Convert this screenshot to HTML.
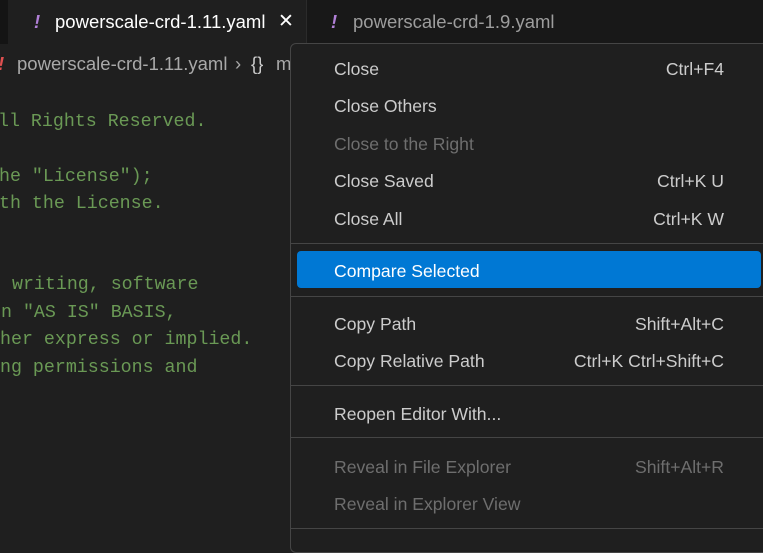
<!DOCTYPE html>
<html><head><style>
body{margin:0;width:763px;height:544px;overflow:hidden;background:#1f1f1f;font-family:"Segoe UI","Liberation Sans",sans-serif;position:relative}
.tabbar{position:absolute;left:0;top:0;width:763px;height:44px;background:#181818}
.tab{position:absolute;top:0;height:44px;font-size:18.5px;line-height:44px}
.t1{left:8px;width:298px;background:#1f1f1f;color:#fff}
.t2{left:306px;width:288px;background:#181818;color:#9d9d9d;border-left:1px solid #2b2b2b}
.bang{color:#b180d7;font-weight:bold;font-style:italic;position:absolute;left:26px}
.crumb{position:absolute;top:50px;left:0;font-size:18.5px;color:#a9a9a9;line-height:28px;white-space:nowrap}
.code{position:absolute;font-family:"Liberation Mono",monospace;font-size:18.3px;color:#6a9955;white-space:pre;line-height:20px}
.menu{position:absolute;left:290px;top:43px;width:480px;height:510px;background:#1f1f1f;border:1px solid #454545;border-radius:6px;box-sizing:border-box}
.it{position:absolute;left:43px;width:390px;font-size:17.6px;color:#ccc;line-height:24px}
.it span{position:absolute;right:0;top:0}
.dis{color:#6e6e6e}
.sep{position:absolute;left:0;width:480px;height:1px;background:#454545}
.hl{position:absolute;left:6px;top:207px;width:464px;height:37px;background:#0078d4;border-radius:4px}
</style></head><body>
<div class="tabbar">
<div style="position:absolute;left:0;top:0;width:8px;height:44px;background:#141414"></div>
<div class="tab t1"><span class="bang">!</span><span style="position:absolute;left:47px">powerscale-crd-1.11.yaml</span><span style="position:absolute;left:270px;font-size:19px">✕</span></div>
<div class="tab t2"><span class="bang" style="left:24px">!</span><span style="position:absolute;left:46px">powerscale-crd-1.9.yaml</span></div>
</div>
<div class="crumb"><span style="color:#e05050;font-weight:bold;font-style:italic;position:absolute;left:-2px">!</span><span style="position:absolute;left:17px">powerscale-crd-1.11.yaml</span><span style="position:absolute;left:235px">›</span><span style="position:absolute;left:251px;color:#ccc">{}</span><span style="position:absolute;left:276px">m</span></div>
<div class="code" style="left:-2px;top:112px">ll Rights Reserved.</div>
<div class="code" style="left:-1px;top:167px">he "License");</div>
<div class="code" style="left:-1px;top:194px">th the License.</div>
<div class="code" style="left:1px;top:275px"> writing, software</div>
<div class="code" style="left:1px;top:303px">n "AS IS" BASIS,</div>
<div class="code" style="left:0px;top:330px">her express or implied.</div>
<div class="code" style="left:0px;top:358px">ng permissions and</div>
<div class="menu">
<div class="it" style="top:13px">Close<span>Ctrl+F4</span></div>
<div class="it" style="top:50px">Close Others</div>
<div class="it dis" style="top:88px">Close to the Right</div>
<div class="it" style="top:125px">Close Saved<span>Ctrl+K U</span></div>
<div class="it" style="top:163px">Close All<span>Ctrl+K W</span></div>
<div class="sep" style="top:199px"></div>
<div class="hl"></div>
<div class="it" style="top:215px;color:#fff">Compare Selected</div>
<div class="sep" style="top:252px"></div>
<div class="it" style="top:268px">Copy Path<span>Shift+Alt+C</span></div>
<div class="it" style="top:305px">Copy Relative Path<span>Ctrl+K Ctrl+Shift+C</span></div>
<div class="sep" style="top:341px"></div>
<div class="it" style="top:358px">Reopen Editor With...</div>
<div class="sep" style="top:393px"></div>
<div class="it dis" style="top:411px">Reveal in File Explorer<span>Shift+Alt+R</span></div>
<div class="it dis" style="top:448px">Reveal in Explorer View</div>
<div class="sep" style="top:484px"></div>
</div>
</body></html>
